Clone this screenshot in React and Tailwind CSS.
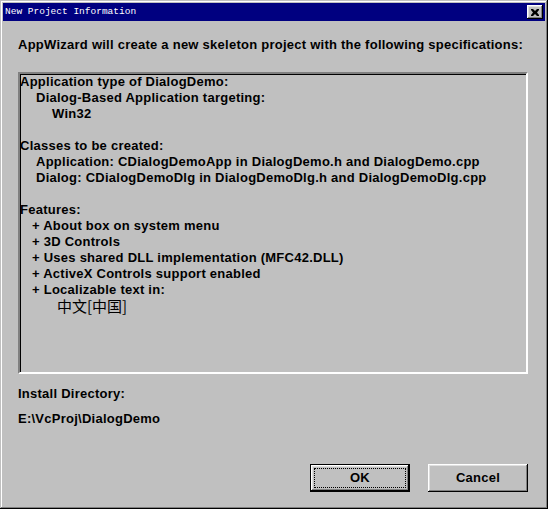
import React from 'react';

const sans = { fontFamily: '"Liberation Sans", Arial, sans-serif' };

function Button({ label, isDefault }) {
  return (
    <button
      className={
        'relative w-[100px] h-[28px] bg-[#c0c0c0] text-black text-[13px] font-bold ' +
        (isDefault
          ? 'border border-black shadow-[inset_-1px_-1px_#000,inset_1px_1px_#fff,inset_-2px_-2px_#808080,inset_2px_2px_#dfdfdf]'
          : 'shadow-[inset_-1px_-1px_#000,inset_1px_1px_#fff,inset_-2px_-2px_#808080,inset_2px_2px_#dfdfdf]')
      }
    >
      {isDefault && <span className="absolute inset-[3px] border border-dotted border-black" />}
      <span className="relative">{label}</span>
    </button>
  );
}

export default function App() {
  return (
    <div
      className="w-[548px] h-[509px] bg-[#c0c0c0] p-[3px] flex flex-col shadow-[inset_-1px_-1px_#000,inset_1px_1px_#c0c0c0,inset_-2px_-2px_#808080,inset_2px_2px_#fff]"
      style={sans}
    >
      {/* title bar */}
      <div className="h-[18px] bg-[#000080] flex items-center justify-between pl-[2px] pr-[2px]">
        <span className="text-white text-[9.5px] leading-none" style={{ fontFamily: '"Liberation Mono", monospace' }}>
          New Project Information
        </span>
        <div className="w-[16px] h-[14px] bg-[#c0c0c0] flex items-center justify-center shadow-[inset_-1px_-1px_#000,inset_1px_1px_#fff,inset_-2px_-2px_#808080,inset_2px_2px_#dfdfdf]">
          <svg width="8" height="7" viewBox="0 0 8 7">
            <path d="M0 0h2l2 2 2-2h2v1L6 3.5 8 6v1H6L4 5 2 7H0V6l2-2.5L0 1z" fill="#000" />
          </svg>
        </div>
      </div>

      {/* body */}
      <div className="flex-1 pl-[15px] pr-[17px] pt-[16px] text-black text-[13px] tracking-[0.25px] font-bold">
        <div className="leading-[16px]">
          AppWizard will create a new skeleton project with the following specifications:
        </div>

        <div className="mt-[19px] h-[302px] border-2 border-t-[#808080] border-l-[#808080] border-b-white border-r-white shadow-[inset_1px_1px_#000] leading-[16px]">
          <div>Application type of DialogDemo:</div>
          <div className="pl-[16px]">Dialog-Based Application targeting:</div>
          <div className="pl-[32px]">Win32</div>
          <div className="h-[16px]" />
          <div>Classes to be created:</div>
          <div className="pl-[16px]">Application: CDialogDemoApp in DialogDemo.h and DialogDemo.cpp</div>
          <div className="pl-[16px]">Dialog: CDialogDemoDlg in DialogDemoDlg.h and DialogDemoDlg.cpp</div>
          <div className="h-[16px]" />
          <div>Features:</div>
          <div className="pl-[12px]">+ About box on system menu</div>
          <div className="pl-[12px]">+ 3D Controls</div>
          <div className="pl-[12px]">+ Uses shared DLL implementation (MFC42.DLL)</div>
          <div className="pl-[12px]">+ ActiveX Controls support enabled</div>
          <div className="pl-[12px]">+ Localizable text in:</div>
          <div
            className="pl-[37px] font-normal text-[15px] tracking-normal"
            style={{ fontFamily: '"Noto Sans CJK SC", "Liberation Sans", sans-serif' }}
          >
            中文[中国]
          </div>
        </div>

        <div className="mt-[12px] leading-[16px]">Install Directory:</div>
        <div className="mt-[9px] leading-[16px]">E:\VcProj\DialogDemo</div>

        <div className="mt-[37px] flex justify-end gap-[18px]">
          <Button label="OK" isDefault />
          <Button label="Cancel" />
        </div>
      </div>
    </div>
  );
}
